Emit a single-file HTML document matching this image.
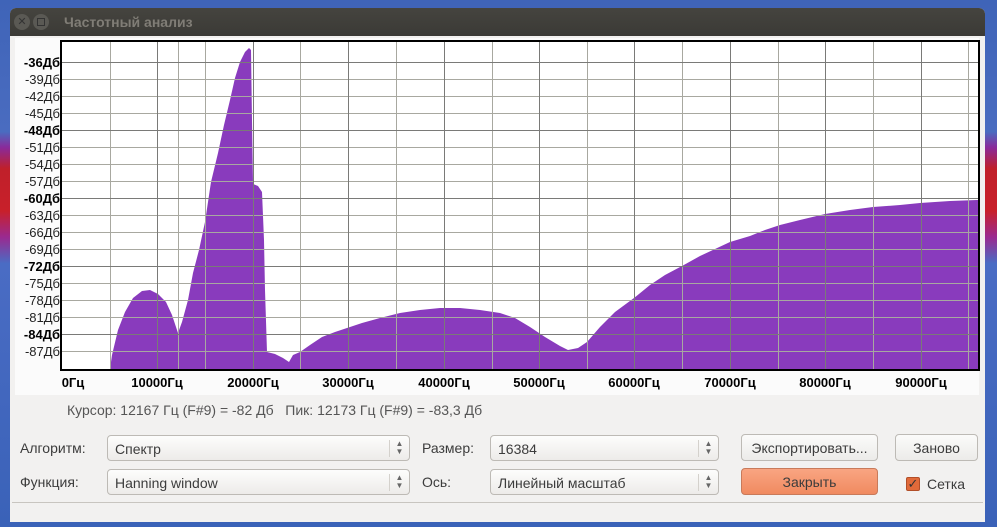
<!DOCTYPE html>
<html><head><meta charset="utf-8"><style>
*{margin:0;padding:0;box-sizing:border-box}
body{width:997px;height:527px;overflow:hidden;position:relative;font-family:"Liberation Sans","DejaVu Sans",sans-serif;
background:linear-gradient(180deg,#3f64b8 0%,#4a6cc0 25%,#8a2a9a 28%,#c0202a 32%,#c8202a 40%,#9a2a90 45%,#4a6cc4 50%,#3a62b8 100%);}
.win{position:absolute;left:10px;top:8px;width:975px;height:514px;background:#f2f1f0;border-radius:6px 6px 0 0;overflow:hidden}
.tb{position:absolute;left:0;top:0;width:100%;height:28px;background:linear-gradient(#45443f,#3b3a36);}
.tb .t{position:absolute;left:54px;top:6px;color:#807d76;font-weight:bold;font-size:14px}
.cb{position:absolute;top:6px;width:16px;height:16px;border-radius:50%;background:#5a5954}
.lbl{position:absolute;font-size:14px;color:#3c3c3c}
.combo{position:absolute;height:26px;border:1px solid #bdbab5;border-radius:4px;background:linear-gradient(#fdfdfc,#edebe9);font-size:14px;color:#3c3c3c;padding:5px 0 0 7px}
.combo .sp{position:absolute;right:0;top:4px;width:20px;height:17px;border-left:1px solid #d4d1cc;font-size:8px;color:#666;text-align:center;line-height:8px}
.btn{position:absolute;height:27px;border:1px solid #bdbab5;border-radius:4px;background:linear-gradient(#fbfbfa,#ecebe9);font-size:14px;color:#3c3c3c;text-align:center;padding-top:5px}
</style></head><body>
<div class="win">
<div class="tb"><div class="cb" style="left:4px;text-align:center;color:#333;font-size:11px;line-height:16px">✕</div><div class="cb" style="left:23px"><div style="position:absolute;left:4px;top:4px;width:8px;height:8px;border:1.5px solid #333"></div></div><div class="t">Частотный анализ</div></div>
</div>
<svg style="position:absolute;left:0;top:0" width="997" height="527">
<rect x="15" y="38" width="964" height="357" fill="#fbfbfb"/>
<rect x="61" y="41" width="918" height="329" fill="#fff"/>
<polygon fill="#893bbd" points="110,369 112,355 118,330 125,312 133,298 142,291 150,290 158,294 166,302 172,315 178,333 182,322 188,300 193,273 199,250 205,222 211,182 218,153 224,125 230,100 235,78 240,62 245,52 249,48 251,50 252,120 253,184 258,186 262,192 264,240 265,290 267,352 275,354 283,358 289,362 293,355 300,352 310,345 322,337 335,332 347,328 362,323 380,318 400,313 420,310 440,308 460,308 480,310 500,313 515,318 530,327 545,337 560,346 568,350 578,348 587,342 600,327 615,312 634,298 650,285 665,275 682,266 700,256 715,249 730,242 750,236 765,230 780,225 800,220 825,214 850,210 873,207 900,205 920,203 950,201 977,200 978,200 978,369"/>
<g stroke="#a8a8a0" stroke-width="1">
<line x1="110.5" y1="41" x2="110.5" y2="370"/><line x1="205.5" y1="41" x2="205.5" y2="370"/><line x1="300.5" y1="41" x2="300.5" y2="370"/><line x1="396.5" y1="41" x2="396.5" y2="370"/><line x1="492.5" y1="41" x2="492.5" y2="370"/><line x1="587.5" y1="41" x2="587.5" y2="370"/><line x1="682.5" y1="41" x2="682.5" y2="370"/><line x1="778.5" y1="41" x2="778.5" y2="370"/><line x1="873.5" y1="41" x2="873.5" y2="370"/><line x1="968.5" y1="41" x2="968.5" y2="370"/>
<line x1="178.5" y1="41" x2="178.5" y2="370"/>
<line x1="61" y1="79.5" x2="979" y2="79.5"/><line x1="61" y1="96.5" x2="979" y2="96.5"/><line x1="61" y1="113.5" x2="979" y2="113.5"/>
<line x1="61" y1="147.5" x2="979" y2="147.5"/><line x1="61" y1="164.5" x2="979" y2="164.5"/><line x1="61" y1="181.5" x2="979" y2="181.5"/>
<line x1="61" y1="215.5" x2="979" y2="215.5"/><line x1="61" y1="232.5" x2="979" y2="232.5"/><line x1="61" y1="249.5" x2="979" y2="249.5"/>
<line x1="61" y1="283.5" x2="979" y2="283.5"/><line x1="61" y1="300.5" x2="979" y2="300.5"/><line x1="61" y1="317.5" x2="979" y2="317.5"/>
<line x1="61" y1="351.5" x2="979" y2="351.5"/>
</g>
<g stroke="#7a7a78" stroke-width="1">
<line x1="157.5" y1="41" x2="157.5" y2="370"/><line x1="253.5" y1="41" x2="253.5" y2="370"/><line x1="348.5" y1="41" x2="348.5" y2="370"/><line x1="444.5" y1="41" x2="444.5" y2="370"/><line x1="539.5" y1="41" x2="539.5" y2="370"/><line x1="634.5" y1="41" x2="634.5" y2="370"/><line x1="730.5" y1="41" x2="730.5" y2="370"/><line x1="825.5" y1="41" x2="825.5" y2="370"/><line x1="921.5" y1="41" x2="921.5" y2="370"/>
<line x1="61" y1="62.5" x2="979" y2="62.5"/><line x1="61" y1="130.5" x2="979" y2="130.5"/><line x1="61" y1="198.5" x2="979" y2="198.5"/><line x1="61" y1="266.5" x2="979" y2="266.5"/><line x1="61" y1="334.5" x2="979" y2="334.5"/>
</g>
<rect x="61" y="41" width="918" height="329" fill="none" stroke="#000" stroke-width="2"/>
<g font-size="13" fill="#222" text-anchor="end" font-family="Liberation Sans,sans-serif">
<text x="60" y="67" font-weight="bold" fill="#000">-36Дб</text><text x="60" y="84">-39Дб</text><text x="60" y="101">-42Дб</text><text x="60" y="118">-45Дб</text>
<text x="60" y="135" font-weight="bold" fill="#000">-48Дб</text><text x="60" y="152">-51Дб</text><text x="60" y="169">-54Дб</text><text x="60" y="186">-57Дб</text>
<text x="60" y="203" font-weight="bold" fill="#000">-60Дб</text><text x="60" y="220">-63Дб</text><text x="60" y="237">-66Дб</text><text x="60" y="254">-69Дб</text>
<text x="60" y="271" font-weight="bold" fill="#000">-72Дб</text><text x="60" y="288">-75Дб</text><text x="60" y="305">-78Дб</text><text x="60" y="322">-81Дб</text>
<text x="60" y="339" font-weight="bold" fill="#000">-84Дб</text><text x="60" y="356">-87Дб</text>
</g>
<g font-size="13" font-weight="bold" fill="#000" text-anchor="middle" font-family="Liberation Sans,sans-serif">
<text x="73" y="387">0Гц</text><text x="157" y="387">10000Гц</text><text x="253" y="387">20000Гц</text><text x="348" y="387">30000Гц</text><text x="444" y="387">40000Гц</text><text x="539" y="387">50000Гц</text><text x="634" y="387">60000Гц</text><text x="730" y="387">70000Гц</text><text x="825" y="387">80000Гц</text><text x="921" y="387">90000Гц</text>
</g>
</svg>
<div class="lbl" style="left:67px;top:402px;color:#555">Курсор: 12167 Гц (F#9) = -82 Дб &nbsp;&nbsp;Пик: 12173 Гц (F#9) = -83,3 Дб</div>
<div class="lbl" style="left:20px;top:440px">Алгоритм:</div>
<div class="combo" style="left:107px;top:435px;width:303px">Спектр<div class="sp">▲<br>▼</div></div>
<div class="lbl" style="left:422px;top:440px">Размер:</div>
<div class="combo" style="left:490px;top:435px;width:229px">16384<div class="sp">▲<br>▼</div></div>
<div class="btn" style="left:741px;top:434px;width:137px">Экспортировать...</div>
<div class="btn" style="left:895px;top:434px;width:83px">Заново</div>
<div class="lbl" style="left:20px;top:474px">Функция:</div>
<div class="combo" style="left:107px;top:469px;width:303px">Hanning window<div class="sp">▲<br>▼</div></div>
<div class="lbl" style="left:422px;top:474px">Ось:</div>
<div class="combo" style="left:490px;top:469px;width:229px">Линейный масштаб<div class="sp">▲<br>▼</div></div>
<div class="btn" style="left:741px;top:468px;width:137px;background:linear-gradient(#f9a582,#f08a60);border-color:#c87a5a">Закрыть</div>
<div style="position:absolute;left:906px;top:477px;width:14px;height:14px;border-radius:2px;background:#e06a3a;border:1px solid #b24e28;color:#333;font-size:13px;line-height:11px;text-align:center;font-weight:bold">✓</div>
<div class="lbl" style="left:927px;top:476px">Сетка</div>
<div style="position:absolute;left:12px;top:502px;width:971px;height:20px;border-top:1px solid #c8c5c0;background:#f2f1f0"></div>
</body></html>
